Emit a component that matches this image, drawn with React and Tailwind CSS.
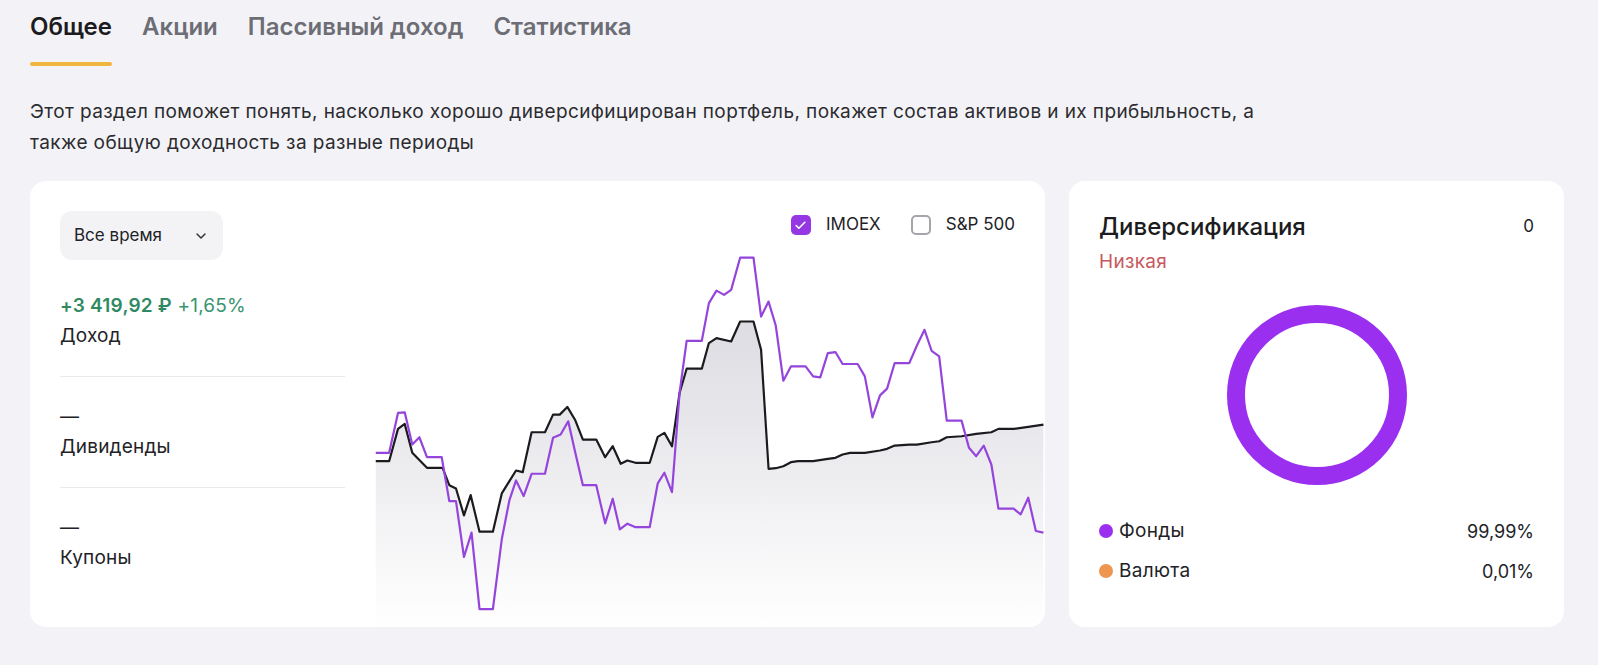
import React from 'react';
import { ChevronDown, Check } from 'lucide-react';

// points read off the reference chart (zoom units), mapped to svg px below
const blackRaw = [[35,815],[65,815],[85,718],[100,703],[117,790],[150,835],[185,835],[200,887],[215,897],[233,978],[248,917],[268,1027],[298,1027],[318,912],[350,843],[365,848],[385,728],[415,728],[433,675],[448,675],[465,652],[483,692],[500,750],[530,750],[550,803],[567,770],[585,823],[600,813],[618,820],[650,820],[668,742],[683,730],[700,770],[717,610],[733,537],[767,537],[783,460],[800,445],[833,455],[853,395],[883,395],[900,480],[917,838],[933,836],[950,830],[967,818],[983,815],[1017,815],[1050,808],[1067,805],[1083,795],[1100,790],[1133,790],[1167,783],[1183,778],[1200,768],[1233,765],[1250,765],[1283,758],[1300,755],[1317,743],[1350,740],[1383,733],[1417,728],[1433,718],[1467,718],[1500,712],[1534,705]];

const purpleRaw = [[35,790],[65,790],[85,670],[100,668],[117,765],[133,743],[150,803],[183,803],[200,935],[215,935],[233,1103],[250,1030],[268,1260],[298,1260],[318,1050],[335,933],[350,873],[367,920],[385,853],[415,853],[433,745],[450,735],[467,695],[483,790],[500,887],[530,887],[550,1002],[567,928],[583,1020],[600,1003],[617,1013],[650,1013],[668,882],[683,850],[700,908],[717,610],[733,453],[767,453],[783,340],[800,302],[817,315],[833,300],[853,203],[883,203],[900,380],[917,335],[933,407],[950,573],[967,530],[1000,530],[1017,560],[1033,563],[1050,490],[1067,487],[1083,523],[1117,523],[1133,560],[1150,683],[1167,617],[1183,597],[1200,520],[1233,520],[1250,467],[1267,420],[1283,483],[1300,500],[1317,693],[1350,693],[1367,775],[1383,800],[1400,768],[1417,825],[1433,958],[1467,958],[1483,975],[1500,925],[1517,1025],[1534,1030]];

const W = 669;
const H = 383;
const toPt = ([x, y]) => [((x - 35) / 2.24).toFixed(1), (y / 3 - 55).toFixed(1)];
const line = (raw) => raw.map((p, i) => `${i ? 'L' : 'M'}${toPt(p).join(' ')}`).join(' ');

const Chart = () => {
    const blackD = line(blackRaw);
    return (
        <svg width={W} height={H} viewBox={`0 0 ${W} ${H}`} className="block">
            <defs>
                <linearGradient id="fillGrad" x1="0" y1="0" x2="0" y2="1">
                    <stop offset="0%" stopColor="#dcdce2" />
                    <stop offset="100%" stopColor="#ffffff" />
                </linearGradient>
            </defs>
            <path d={`${blackD} L${W} ${H} L0 ${H} Z`} fill="url(#fillGrad)" />
            <path d={blackD} fill="none" stroke="#1b1b1f" strokeWidth="2.2" strokeLinejoin="round" />
            <path d={line(purpleRaw)} fill="none" stroke="#9544dc" strokeWidth="2.2" strokeLinejoin="round" />
        </svg>
    );
};

const Stat = ({ children, label, last }) => (
    <div className={`py-[25px] ${last ? '' : 'border-b border-[#ebebef]'}`}>
        <div className="leading-[30px]">{children}</div>
        <div className="leading-[30px] text-[#222226]">{label}</div>
    </div>
);

const App = () => {
    const tabs = ['Общее', 'Акции', 'Пассивный доход', 'Статистика'];

    return (
        <div className="min-h-screen bg-[#f3f3f7] px-[30px] pt-[11px] text-[#222226]" style={{ fontFamily: 'Inter, "Noto Sans", sans-serif' }}>
            {/* Tabs */}
            <div className="flex gap-[30px]">
                {tabs.map((t, i) => (
                    <div key={t} className="flex flex-col">
                        <span className={`text-[24px] leading-[32px] font-semibold ${i === 0 ? 'text-[#1c1c20]' : 'text-[#6d6d75]'}`}>{t}</span>
                        <div className={`mt-[19px] h-[4px] rounded-full ${i === 0 ? 'bg-[#f2b53e]' : 'bg-transparent'}`} />
                    </div>
                ))}
            </div>

            <p className="mt-[30px] max-w-[1250px] text-[19px] leading-[31px] tracking-[0.4px] text-[#2b2b30]">
                Этот раздел поможет понять, насколько хорошо диверсифицирован портфель, покажет состав активов и их прибыльность, а также общую доходность за разные периоды
            </p>

            <div className="mt-[23px] flex gap-[24px] pr-[4px]">
                {/* Left card */}
                <div className="flex h-[446px] flex-1 overflow-hidden rounded-2xl bg-white pl-[30px]">
                    <div className="w-[285px] shrink-0 pt-[30px] text-[19px] tracking-[0.2px]">
                        <button className="flex h-[49px] w-[163px] items-center justify-between rounded-xl bg-[#f3f3f6] pl-[14px] pr-[14px] text-[17px] tracking-normal">
                            <span className="text-[#222226]">Все время</span>
                            <ChevronDown size={16} strokeWidth={2.2} className="text-[#333]" />
                        </button>
                        <div className="mt-[6px]">
                            <Stat label="Доход">
                                <span className="font-semibold text-[#2f8a63]">+3 419,92 ₽</span>{' '}
                                <span className="text-[#3a9470]">+1,65%</span>
                            </Stat>
                            <Stat label="Дивиденды">—</Stat>
                            <Stat label="Купоны" last>—</Stat>
                        </div>
                    </div>
                    <div className="ml-[30px] flex flex-1 flex-col">
                        <div className="flex h-[64px] items-end justify-end gap-[30px] pb-[7px] pr-[30px] text-[17px]">
                            <label className="flex items-center gap-[15px]">
                                <span className="flex h-[20px] w-[20px] items-center justify-center rounded-[5px] bg-[#9537e2]">
                                    <Check size={13} strokeWidth={3} className="text-white" />
                                </span>
                                <span>IMOEX</span>
                            </label>
                            <label className="flex items-center gap-[15px]">
                                <span className="h-[20px] w-[20px] rounded-[5px] border-2 border-[#a5a5ab]" />
                                <span>S&amp;P 500</span>
                            </label>
                        </div>
                        <Chart />
                    </div>
                </div>

                {/* Right card */}
                <div className="flex h-[446px] w-[495px] flex-col rounded-2xl bg-white px-[30px] pt-[30px]">
                    <div className="flex items-center justify-between">
                        <span className="text-[24px] font-medium leading-[32px] text-[#1c1c20]">Диверсификация</span>
                        <span className="text-[17px] text-[#222226]">0</span>
                    </div>
                    <div className="mt-[4px] text-[19px] leading-[30px] tracking-[0.3px] text-[#c8585c]">Низкая</div>
                    <div className="mt-[28px] flex justify-center">
                        <div className="h-[180px] w-[180px] rounded-full border-[18px] border-[#9b2ff0]" />
                    </div>
                    <div className="mt-[26px] text-[19px] tracking-[0.3px]">
                        <div className="flex h-[40px] items-center justify-between">
                            <div className="flex items-center gap-[6px]">
                                <span className="h-[14px] w-[14px] rounded-full bg-[#9b2ff0]" />
                                <span>Фонды</span>
                            </div>
                            <span className="text-[18px] tracking-normal">99,99%</span>
                        </div>
                        <div className="flex h-[40px] items-center justify-between">
                            <div className="flex items-center gap-[6px]">
                                <span className="h-[14px] w-[14px] rounded-full bg-[#ee9650]" />
                                <span>Валюта</span>
                            </div>
                            <span className="text-[18px] tracking-normal">0,01%</span>
                        </div>
                    </div>
                </div>
            </div>
        </div>
    );
};

export default App;
